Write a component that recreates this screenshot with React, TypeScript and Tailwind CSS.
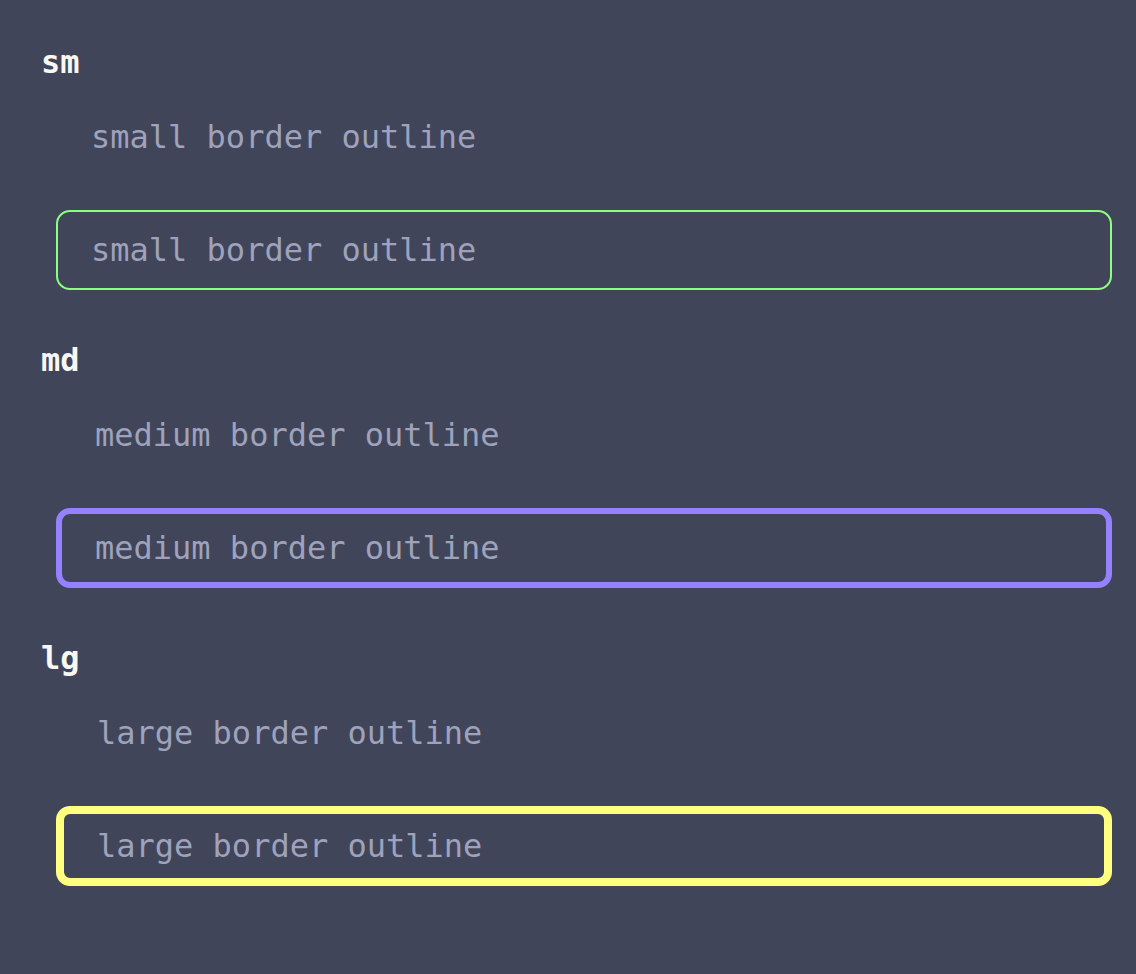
import React from "react";

interface IOutlineRowProps {
    label: string;
    border: string;
}

const mono = "font-['DejaVu_Sans_Mono','Liberation_Mono',monospace]";

const OutlineRow = ({ label, border }: IOutlineRowProps) => (
    <div
        className={`ml-[15px] flex h-20 items-center rounded-[14px] pl-[33px] text-[32px] leading-none text-[#9ea2bb] ${mono} ${border}`}
    >
        {label}
    </div>
);

const sections = [
    { name: "sm", label: "small border outline", width: "border-2", color: "border-[#8aff80]" },
    { name: "md", label: "medium border outline", width: "border-[6px]", color: "border-[#9580ff]" },
    { name: "lg", label: "large border outline", width: "border-[8px]", color: "border-[#ffff80]" },
];

const App = () => {
    return (
        <div className="min-h-screen bg-[#41455a] pl-[41px] pr-[24px] pt-[46px]">
            <div className="flex flex-col gap-[54px]">
                {sections.map(({ name, label, width, color }) => (
                    <div key={name} className="flex flex-col">
                        <h2
                            className={`h-8 text-[32px] font-bold leading-8 text-[#f8f8f2] ${mono}`}
                        >
                            {name}
                        </h2>
                        <div className="mt-[19px]">
                            <OutlineRow label={label} border={`${width} border-transparent`} />
                        </div>
                        <div className="mt-[33px]">
                            <OutlineRow label={label} border={`${width} ${color}`} />
                        </div>
                    </div>
                ))}
            </div>
        </div>
    );
};

export default App;
